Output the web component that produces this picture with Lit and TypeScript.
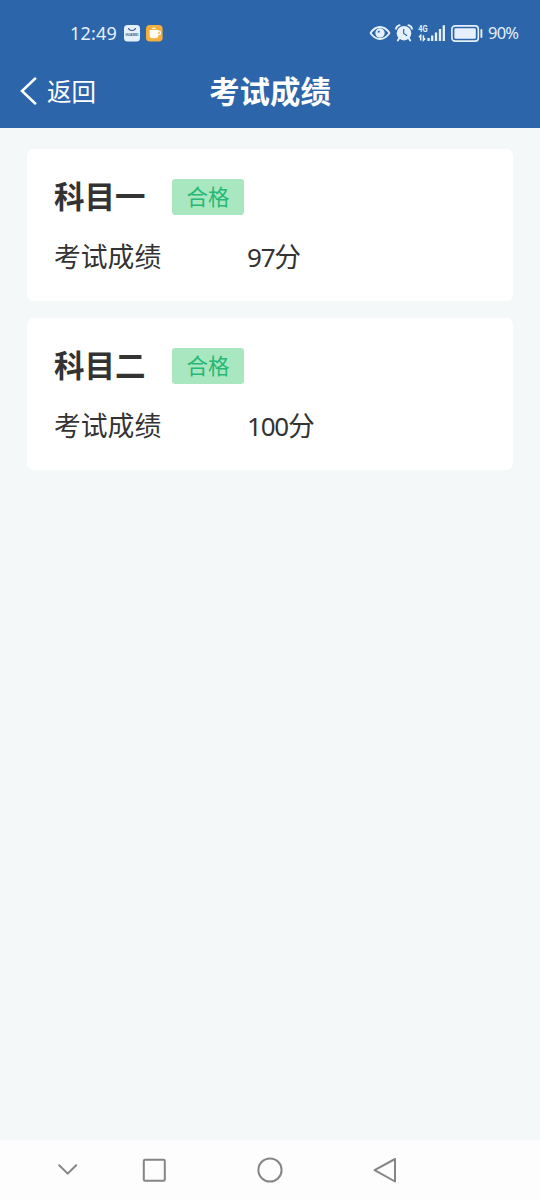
import { LitElement, html, css } from "lit";
import { customElement, property } from "lit/decorators.js";

const FONT = css`"Noto Sans CJK SC", "Noto Sans", sans-serif`;
const DIGITS = css`"Noto Sans", "Open Sans", sans-serif`;

@customElement("status-bar")
class StatusBar extends LitElement {
  static styles = css`
    :host {
      display: flex;
      align-items: center;
      justify-content: space-between;
      height: 66px;
      box-sizing: border-box;
      padding: 0 21px 0 70px;
      color: #e6f0fc;
      font-family: ${DIGITS};
    }
    .group { display: flex; align-items: center; height: 26px; }
    .clock { width: 54px; font-size: 18px; line-height: 26px; letter-spacing: 0.2px; white-space: nowrap; }
    .percent { width: 31px; font-size: 16.5px; line-height: 26px; letter-spacing: -0.8px; white-space: nowrap; }
    svg { display: block; flex: none; overflow: visible; }
    .app { margin-right: 6px; }
    .brand { font: 700 4px "Liberation Sans", sans-serif; }
    .net { font: 700 9.5px "Roboto", sans-serif; }
    .eye { margin-right: 5px; }
    .alarm { margin-right: 5px; }
    .signal { margin-right: 5px; }
    .battery { margin-right: 5px; }
  `;

  render() {
    return html`
      <div class="group">
        <span class="clock">12:49</span>
        <svg class="app" width="16" height="17" viewBox="0 0 16 17">
          <rect width="16" height="16.5" rx="3.5" fill="#e6f0fb" />
          <path d="M4.4 3.2a3.7 3 0 0 0 7.2 0" fill="none" stroke="#33547f" stroke-width="1.1" />
          <text class="brand" x="1.4" y="11" textLength="13" lengthAdjust="spacingAndGlyphs" fill="#3d5f8c">HUAWEI</text>
        </svg>
        <svg width="17" height="17" viewBox="0 0 17 17">
          <rect width="16.6" height="16.6" rx="3.8" fill="#f4af3c" />
          <path d="M3.6 5h8.7v5.2a3 3 0 0 1-3 3H6.6a3 3 0 0 1-3-3z" fill="#fffdf6" />
          <path d="M12 6.2h.8a1.5 1.5 0 0 1 0 3.4H12M6.2 4c.7-1.3 2.6-1.3 3.4 0" fill="none" stroke="#fffdf6" stroke-width="1.2" />
        </svg>
      </div>
      <div class="group">
        <svg class="eye" width="20" height="16" viewBox="0.5 0 20 16">
          <path d="M1 8Q5 2 10.5 2T20 8Q16 14 10.5 14T1 8Z" fill="none" stroke="currentColor" stroke-width="1.8" stroke-linejoin="round" />
          <circle cx="10.5" cy="8" r="4.7" fill="currentColor" />
          <path d="M10.2 7.6V5.4A2.4 2.4 0 0 0 7.9 7.6z" fill="#2c65aa" />
        </svg>
        <svg class="alarm" width="18" height="18" viewBox="0 0 18 18">
          <circle cx="9" cy="9.2" r="7.3" fill="currentColor" />
          <path d="M1 4.8Q1.6 2 4.6 1.2M17 4.8Q16.4 2 13.4 1.2M4.2 14.2 2.8 16.4M13.8 14.2l1.4 2.2" fill="none" stroke="currentColor" stroke-width="1.9" stroke-linecap="round" />
          <path d="M8.7 5v4.5l3.5 2.2" fill="none" stroke="#2c65aa" stroke-width="1.2" />
        </svg>
        <svg class="signal" width="28" height="18" viewBox="0 0 28 18">
          <text class="net" x="0.3" y="7.8" textLength="9.4" lengthAdjust="spacingAndGlyphs" fill="currentColor">4G</text>
          <path d="M2.7 16.4v-5L.9 13.2M5.4 11.2v5L7.2 14.4" fill="none" stroke="currentColor" stroke-width="1.5" />
          <path d="M10.6 17v-3M14.2 17v-5.4M18 17V8.6M22 17V5M25.8 17V1.2" fill="none" stroke="currentColor" stroke-width="2.3" />
        </svg>
        <svg class="battery" width="32" height="17" viewBox="0 0 32 17">
          <rect x=".9" y=".9" width="26.4" height="15.2" rx="3.2" fill="none" stroke="currentColor" stroke-width="1.6" />
          <rect x="3.4" y="3.3" width="21.4" height="10.4" rx="1.2" fill="currentColor" />
          <path d="M30.4 5v7" stroke="currentColor" stroke-width="1.9" stroke-linecap="round" />
        </svg>
        <span class="percent">90%</span>
      </div>
    `;
  }
}

@customElement("title-bar")
class TitleBar extends LitElement {
  static styles = css`
    :host {
      display: grid;
      grid-template-columns: 1fr auto 1fr;
      align-items: center;
      height: 50px;
      padding: 0 20px 12px;
      color: #fff;
      font-family: ${FONT};
    }
    .back { display: flex; align-items: center; gap: 10px; font-size: 24.5px; line-height: 36px; }
    .title { font-size: 30.4px; line-height: 44px; font-weight: 700; padding-bottom: 2px; }
    svg { display: block; }
  `;

  render() {
    return html`
      <div class="back">
        <svg width="17" height="28" viewBox="0 0 17 28">
          <path d="M15.2 1.5 2 14l13.2 12.5" fill="none" stroke="currentColor" stroke-width="2.5" stroke-linecap="round" />
        </svg>
        <span>返回</span>
      </div>
      <div class="title">考试成绩</div>
    `;
  }
}

@customElement("score-card")
class ScoreCard extends LitElement {
  @property() subject = "";
  @property() result = "";
  @property() score = "";

  static styles = css`
    :host {
      display: flex;
      flex-direction: column;
      gap: 21px;
      height: 152px;
      box-sizing: border-box;
      padding: 30px 27px 0 27px;
      border-radius: 7px;
      background: #fff;
      color: #333;
      font-family: ${FONT};
    }
    .head { display: flex; align-items: flex-start; height: 36px; }
    .subject { width: 118px; font-size: 30.5px; line-height: 33px; font-weight: 700; }
    .tag {
      width: 72px;
      height: 36px;
      border-radius: 3px;
      background: #a9e7c0;
      color: #26b876;
      font-size: 21.5px;
      line-height: 34px;
      text-align: center;
    }
    .row { display: flex; height: 40px; font-size: 26.8px; line-height: 40px; }
    .label { width: 192px; }
    .value { display: flex; }
    .number { font-family: ${DIGITS}; font-size: 26px; line-height: 42px; letter-spacing: -1.2px; padding-left: 1px; }
  `;

  render() {
    return html`
      <div class="head"><span class="subject">${this.subject}</span><span class="tag">${this.result}</span></div>
      <div class="row"><span class="label">考试成绩</span><span class="value"><span class="number">${this.score}</span><span>分</span></span></div>
    `;
  }
}

@customElement("nav-bar")
class NavBar extends LitElement {
  static styles = css`
    :host {
      display: grid;
      grid-template-columns: 57px 116px 116px 113px;
      align-items: center;
      height: 60px;
      box-sizing: border-box;
      background: #fdfdfd;
      padding-left: 39px;
    }
    svg { display: block; fill: none; stroke: #858585; stroke-width: 2; stroke-linejoin: round; stroke-linecap: round; justify-self: center; }
  `;

  render() {
    return html`
      <svg width="28" height="28" viewBox="0 0 28 28"><path d="M5.2 9.2 13.7 17.6 22.2 9.2" /></svg>
      <svg width="28" height="28" viewBox="0 0 28 28"><rect x="3.8" y="3.8" width="21" height="21" rx="1.2" /></svg>
      <svg width="28" height="28" viewBox="0 0 28 28"><circle cx="14" cy="14" r="11.6" /></svg>
      <svg width="28" height="28" viewBox="0 0 28 28"><path d="M24 3v22.5L3.6 14.2z" /></svg>
    `;
  }
}

@customElement("app-root")
class AppRoot extends LitElement {
  static styles = css`
    :host {
      display: flex;
      flex-direction: column;
      height: 1200px;
      background: #f4f8f9;
    }
    .top { height: 128px; background: #2c65aa; }
    .list { flex: 1; display: flex; flex-direction: column; gap: 17px; padding: 21px 27px 0; }
  `;

  records = [
    { subject: "科目一", result: "合格", score: "97" },
    { subject: "科目二", result: "合格", score: "100" },
  ];

  render() {
    return html`
      <div class="top"><status-bar></status-bar><title-bar></title-bar></div>
      <div class="list">
        ${this.records.map((r) => html`<score-card .subject=${r.subject} .result=${r.result} .score=${r.score}></score-card>`)}
      </div>
      <nav-bar></nav-bar>
    `;
  }
}
